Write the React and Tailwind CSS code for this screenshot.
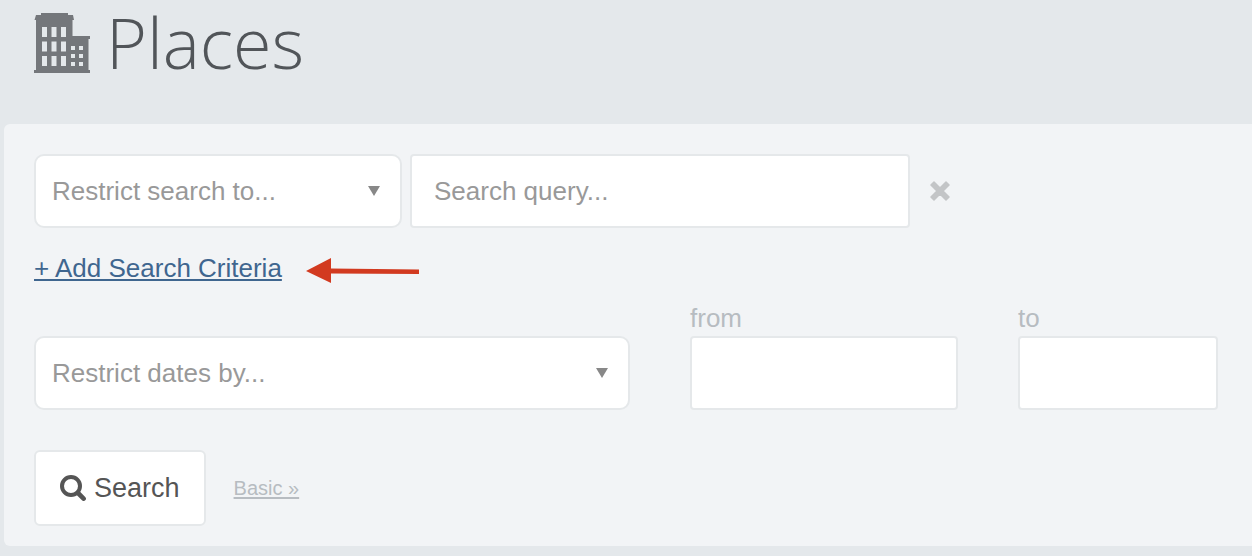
import React, {useState} from "react";

// --- ICONS ---

const BuildingIcon = () => (
  <svg viewBox="0 0 56 60" className="h-[60px] w-14 text-[#74777b]" fill="currentColor" aria-hidden="true">
    <path
      fillRule="evenodd"
      d="M7 0H34V2H39L40 7H38.500V23H56V26H54.500V57H56V60H0V57H2V7H0.500L2 2H7Z
      M8 14V24H13V14Z M17.500 14V24H22.500V14Z M27 14V24H32V14Z
      M8 28.500V38.500H13V28.500Z M17.500 28.500V38.500H22.500V28.500Z M27 28.500V38.500H32V28.500Z
      M8 43V53H13V43Z M17.500 43V53H22.500V43Z M27 43V53H32V43Z
      M37 33V37H41V33Z M45 33V37H49V33Z
      M37 41V45H41V41Z M45 41V45H49V41Z
      M37 49V53H41V49Z M45 49V53H49V49Z"
    />
  </svg>
);

const SearchIcon = () => (
  <svg viewBox="0 0 26 26" className="h-[26px] w-[26px]" fill="none" stroke="currentColor" aria-hidden="true">
    <circle cx="11" cy="11" r="9" strokeWidth="4" />
    <path d="M18 18L23.600 23.600" strokeWidth="4.6" strokeLinecap="round" />
  </svg>
);

const RemoveIcon = () => (
  <svg viewBox="0 0 20 20" className="h-5 w-5" fill="currentColor" stroke="currentColor" aria-hidden="true">
    <path
      d="M4 1L10 7L16 1L19 4L13 10L19 16L16 19L10 13L4 19L1 16L7 10L1 4Z"
      strokeWidth="1.5"
      strokeLinejoin="round"
    />
  </svg>
);

const ArrowIcon = () => (
  <svg viewBox="0 0 113 26" className="h-[26px] w-[113px]" aria-hidden="true">
    <path d="M0 13L25 0V10.500L113 11.500V16L25 15.500V25Z" fill="#d23a20" />
  </svg>
);

// --- FORM FIELDS ---

const SelectField = ({label, options}) => (
  <div className="relative">
    <select
      aria-label={label}
      className="block h-[74px] w-full appearance-none rounded-[10px] border-2 border-[#e5e8ea] bg-white pl-4 pr-12 text-[26px] text-[#999999]"
    >
      <option value="">{label}</option>
      {options.map((option) => (
        <option key={option}>{option}</option>
      ))}
    </select>
    <svg
      viewBox="0 0 12 10"
      className="pointer-events-none absolute right-[22px] top-8 h-[10px] w-3"
      aria-hidden="true"
    >
      <path d="M0 0H12L6 10Z" fill="#888888" />
    </svg>
  </div>
);

const DateField = ({id, label}) => (
  <div>
    <label htmlFor={id} className="block text-[26px] leading-9 text-[#b7bcc1]">
      {label}
    </label>
    <input
      id={id}
      type="text"
      className="block h-[74px] w-full rounded-sm border-2 border-[#e5e8ea] bg-white px-4 text-[26px] text-[#555555]"
    />
  </div>
);

function App() {
  const [query, setQuery] = useState("");

  return (
    <main className="min-h-screen bg-[#e4e8eb] pb-[10px] pl-1 font-['Liberation_Sans',Arial,sans-serif]">
      {/* Page heading */}
      <header className="flex h-[124px] items-start gap-4 pl-[30px]">
        <div className="pt-[13px]">
          <BuildingIcon />
        </div>
        <h1 className="font-['Open_Sans',sans-serif] text-[70px] font-light leading-[84px] text-[#515559]">
          Places
        </h1>
      </header>

      {/* Search panel */}
      <form
        onSubmit={(e) => e.preventDefault()}
        className="rounded-l-md bg-[#f2f4f6] pb-5 pl-[30px] pr-[34px] pt-[30px]"
      >
        <div className="grid grid-cols-[368fr_500fr_300fr] items-center gap-2">
          <SelectField label="Restrict search to..." options={["Name", "Address"]} />
          <input
            type="text"
            aria-label="Search query"
            placeholder="Search query..."
            value={query}
            onChange={(e) => setQuery(e.target.value)}
            className="block h-[74px] w-full rounded-sm border-2 border-[#e5e8ea] bg-white px-[22px] text-[26px] text-[#555555] placeholder:text-[#999999]"
          />
          <button
            type="button"
            aria-label="Remove"
            onClick={() => setQuery("")}
            className="ml-3 w-5 text-[#c3c5c7]"
          >
            <RemoveIcon />
          </button>
        </div>

        <div className="mt-[22px] flex items-center gap-6">
          <a
            href="#add"
            className="text-[26px] leading-9 text-[#3f668f] underline decoration-2 underline-offset-2"
          >
            + Add Search Criteria
          </a>
          <div className="pt-1.5">
            <ArrowIcon />
          </div>
        </div>

        <div className="mt-[14px] grid grid-cols-[596fr_268fr_200fr] items-end gap-[60px]">
          <SelectField label="Restrict dates by..." options={["Created", "Modified"]} />
          <DateField id="from" label="from" />
          <DateField id="to" label="to" />
        </div>

        <div className="mt-10 flex items-center gap-7">
          <button
            type="submit"
            className="flex h-[76px] items-center gap-2 rounded-md border-2 border-[#e5e8ea] bg-white px-6 text-[27px] text-[#555555]"
          >
            <SearchIcon />
            Search
          </button>
          <a href="#basic" className="text-[20px] text-[#b7bcc1] underline decoration-2 underline-offset-2">
            Basic »
          </a>
        </div>
      </form>
    </main>
  );
}

export default App;
